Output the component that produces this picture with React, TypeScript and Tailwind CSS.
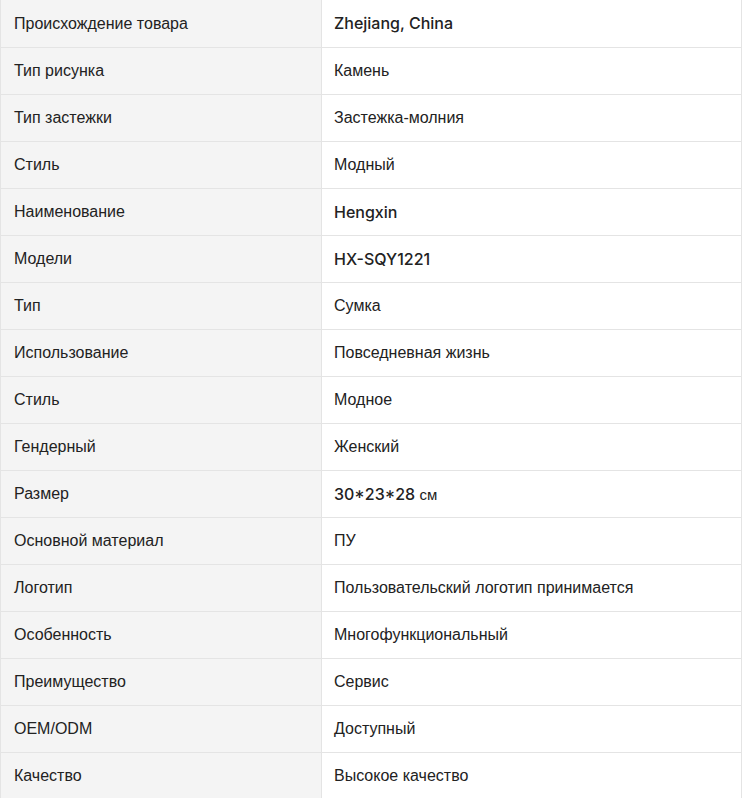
import React from "react";

type Row = { label: string; value: React.ReactNode };

const bold = "font-['Inter',sans-serif] font-medium text-[16px]";

const rows: Row[] = [
  { label: "Происхождение товара", value: <span className={bold}>Zhejiang, China</span> },
  { label: "Тип рисунка", value: "Камень" },
  { label: "Тип застежки", value: "Застежка-молния" },
  { label: "Стиль", value: "Модный" },
  { label: "Наименование", value: <span className={bold}>Hengxin</span> },
  { label: "Модели", value: <span className={bold}>HX-SQY1221</span> },
  { label: "Тип", value: "Сумка" },
  { label: "Использование", value: "Повседневная жизнь" },
  { label: "Стиль", value: "Модное" },
  { label: "Гендерный", value: "Женский" },
  {
    label: "Размер",
    value: (
      <>
        <span className={bold}>30*23*28</span>{" "}
        <span className="text-[15px]">см</span>
      </>
    ),
  },
  { label: "Основной материал", value: "ПУ" },
  { label: "Логотип", value: "Пользовательский логотип принимается" },
  { label: "Особенность", value: "Многофункциональный" },
  { label: "Преимущество", value: "Сервис" },
  { label: "OEM/ODM", value: "Доступный" },
  { label: "Качество", value: "Высокое качество" },
];

export default function App() {
  return (
    <div className="w-[742px] bg-white font-['Liberation_Sans',Arial,sans-serif] text-[16px] text-[#222]">
      <table className="w-full border-collapse table-fixed">
        <colgroup>
          <col className="w-[321px]" />
          <col />
        </colgroup>
        <tbody>
          {rows.map((r, i) => (
            <tr key={i} className="h-[47px]">
              <td className="border border-t-0 border-[#e4e4e4] bg-[#f4f4f4] pl-[13px] pt-px align-middle">
                {r.label}
              </td>
              <td className="border border-t-0 border-[#e4e4e4] pl-[12px] pt-px align-middle">
                {r.value}
              </td>
            </tr>
          ))}
        </tbody>
      </table>
    </div>
  );
}
